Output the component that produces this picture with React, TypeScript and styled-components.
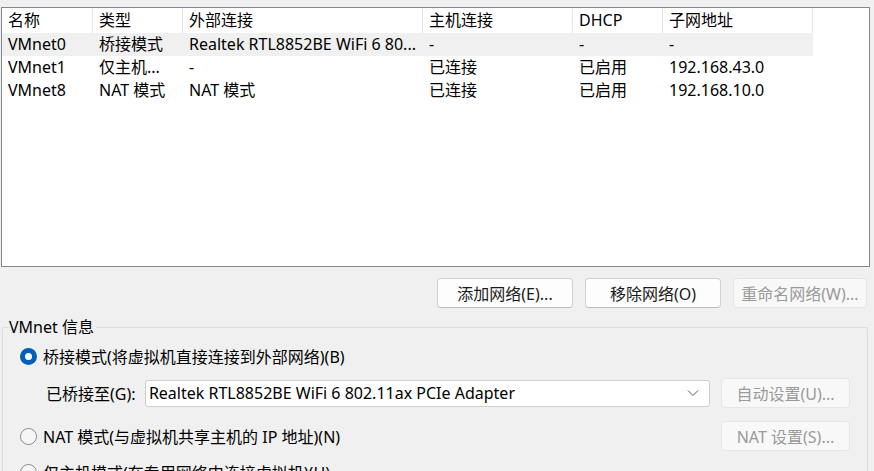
import styled, { createGlobalStyle } from 'styled-components';

const GlobalStyle = createGlobalStyle`
  html, body {
    margin: 0;
    padding: 0;
    background: #f0f0f0;
    overflow: hidden;
  }
  body {
    font-family: 'Noto Sans', 'Noto Sans CJK SC', sans-serif;
    font-size: 16px;
    color: #000;
  }
`;

const COLS = [91, 90, 240, 150, 90, 150];

interface NetRow {
  name: string;
  type: string;
  external: string;
  host: string;
  dhcp: string;
  subnet: string;
}

const rows: NetRow[] = [
  { name: 'VMnet0', type: '桥接模式', external: 'Realtek RTL8852BE WiFi 6 80...', host: '-', dhcp: '-', subnet: '-' },
  { name: 'VMnet1', type: '仅主机...', external: '-', host: '已连接', dhcp: '已启用', subnet: '192.168.43.0' },
  { name: 'VMnet8', type: 'NAT 模式', external: 'NAT 模式', host: '已连接', dhcp: '已启用', subnet: '192.168.10.0' },
];

const headers = ['名称', '类型', '外部连接', '主机连接', 'DHCP', '子网地址'];

const Page = styled.div`
  width: 874px;
  height: 471px;
  padding-top: 7px;
  box-sizing: border-box;
`;

const ListBox = styled.div`
  margin-left: 1px;
  width: 869px;
  height: 260px;
  box-sizing: border-box;
  border: 1px solid #828790;
  background: #fff;
`;

const HeaderRow = styled.div`
  display: flex;
  height: 25px;
`;

const HeaderCell = styled.div<{ $w: number }>`
  width: ${(p) => p.$w}px;
  box-sizing: border-box;
  border-right: 1px solid #e5e5e5;
  padding-left: 6px;
  line-height: 24px;
  white-space: nowrap;
  overflow: hidden;
`;

const DataRow = styled.div<{ $selected?: boolean }>`
  display: flex;
  height: 23px;
  width: ${COLS.reduce((a, b) => a + b, 0)}px;
  background: ${(p) => (p.$selected ? '#f0f0f0' : 'transparent')};
`;

const DataCell = styled.div<{ $w: number }>`
  width: ${(p) => p.$w}px;
  box-sizing: border-box;
  padding-left: 6px;
  line-height: 22px;
  white-space: nowrap;
  overflow: hidden;
`;

const ButtonRow = styled.div`
  display: flex;
  justify-content: flex-end;
  gap: 12px;
  padding: 11px 7px 0 0;
`;

const Button = styled.button<{ $disabled?: boolean; $w?: number }>`
  width: ${(p) => p.$w ?? 136}px;
  height: 30px;
  box-sizing: border-box;
  font-family: inherit;
  font-size: 16px;
  border-radius: 4px;
  border: 1px solid ${(p) => (p.$disabled ? '#e6e6e6' : '#d0d0d0')};
  border-bottom-color: ${(p) => (p.$disabled ? '#e6e6e6' : '#bcbcbc')};
  background: ${(p) => (p.$disabled ? '#f8f8f8' : '#fdfdfd')};
  color: ${(p) => (p.$disabled ? '#9a9a9a' : '#1a1a1a')};
  padding: 0;
  white-space: nowrap;
`;

const Group = styled.fieldset`
  margin: 10px 6px 0 2px;
  padding: 5px 0 0 0;
  border: 1px solid #dcdcdc;
  border-bottom: none;
  border-radius: 2px 2px 0 0;
  min-width: 0;
`;

const Legend = styled.legend`
  padding: 0 2px 0 0;
  margin-left: 6px;
  line-height: 18px;
`;

const GroupBody = styled.div`
  padding: 0 17px 0 17px;
`;

const OptionRow = styled.div`
  display: flex;
  align-items: center;
  height: 30px;
`;

const RadioCircle = styled.span<{ $checked?: boolean }>`
  width: 17px;
  height: 17px;
  box-sizing: border-box;
  border-radius: 50%;
  flex-shrink: 0;
  margin-right: 6px;
  display: flex;
  align-items: center;
  justify-content: center;
  background: ${(p) => (p.$checked ? '#005fb8' : '#f6f6f6')};
  border: ${(p) => (p.$checked ? 'none' : '1px solid #8a8a8a')};
  &::after {
    content: '';
    display: ${(p) => (p.$checked ? 'block' : 'none')};
    width: 7px;
    height: 7px;
    border-radius: 50%;
    background: #fff;
  }
`;

const Label = styled.span`
  white-space: nowrap;
`;

const Spacer = styled.div`
  flex: 1;
`;

const BridgeRow = styled.div`
  display: flex;
  align-items: center;
  height: 30px;
  margin: 7px 0 0 26px;
`;

const BridgeLabel = styled.span`
  width: 99px;
  white-space: nowrap;
`;

const Combo = styled.div`
  width: 566px;
  height: 27px;
  box-sizing: border-box;
  border: 1px solid #cfcfcf;
  border-radius: 3px;
  background: #fff;
  display: flex;
  align-items: center;
  padding: 0 10px 0 3px;
  margin-right: 11px;
`;

const ComboText = styled.span`
  flex: 1;
  white-space: nowrap;
`;

const NatRow = styled(OptionRow)`
  margin-top: 13px;
`;

const HostRow = styled(OptionRow)`
  margin-top: 6px;
`;

const Chevron = () => (
  <svg width="12" height="8" viewBox="0 0 12 8">
    <path d="M1 1.5 L6 6.5 L11 1.5" fill="none" stroke="#5a5a5a" strokeWidth="1" />
  </svg>
);

export default function App() {
  return (
    <Page>
      <GlobalStyle />
      <ListBox>
        <HeaderRow>
          {headers.map((h, i) => (
            <HeaderCell key={h} $w={COLS[i]}>
              {h}
            </HeaderCell>
          ))}
        </HeaderRow>
        {rows.map((r, idx) => {
          const vals = [r.name, r.type, r.external, r.host, r.dhcp, r.subnet];
          return (
            <DataRow key={r.name} $selected={idx === 0}>
              {vals.map((v, i) => (
                <DataCell key={i} $w={COLS[i]}>
                  {v}
                </DataCell>
              ))}
            </DataRow>
          );
        })}
      </ListBox>
      <ButtonRow>
        <Button>添加网络(E)...</Button>
        <Button>移除网络(O)</Button>
        <Button $disabled $w={134}>重命名网络(W)...</Button>
      </ButtonRow>
      <Group>
        <Legend>VMnet 信息</Legend>
        <GroupBody>
          <OptionRow>
            <RadioCircle $checked />
            <Label>桥接模式(将虚拟机直接连接到外部网络)(B)</Label>
          </OptionRow>
          <BridgeRow>
            <BridgeLabel>已桥接至(G):</BridgeLabel>
            <Combo>
              <ComboText>Realtek RTL8852BE WiFi 6 802.11ax PCIe Adapter</ComboText>
              <Chevron />
            </Combo>
            <Button $disabled $w={129}>自动设置(U)...</Button>
          </BridgeRow>
          <NatRow>
            <RadioCircle />
            <Label>NAT 模式(与虚拟机共享主机的 IP 地址)(N)</Label>
            <Spacer />
            <Button $disabled $w={129}>NAT 设置(S)...</Button>
          </NatRow>
          <HostRow>
            <RadioCircle />
            <Label>仅主机模式(在专用网络中连接虚拟机)(H)</Label>
          </HostRow>
        </GroupBody>
      </Group>
    </Page>
  );
}
